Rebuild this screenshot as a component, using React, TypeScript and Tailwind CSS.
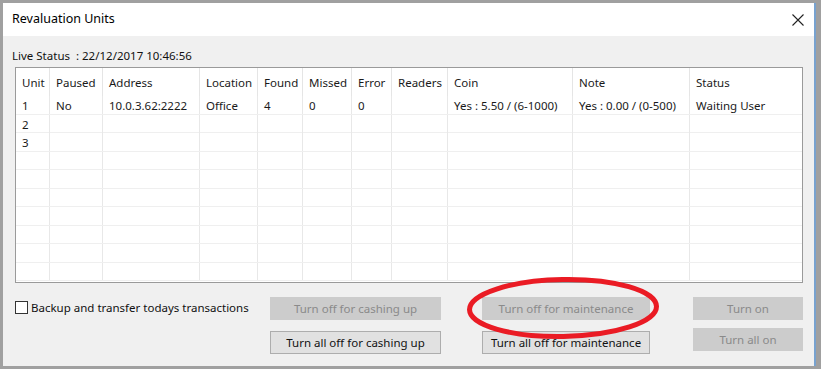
import React from "react"

const cols = [34, 53, 97, 58, 45, 49, 40, 56, 125, 117, 112]
const headers = ["Unit", "Paused", "Address", "Location", "Found", "Missed", "Error", "Readers", "Coin", "Note", "Status"]
const rows: string[][] = [
    ["1", "No", "10.0.3.62:2222", "Office", "4", "0", "0", "", "Yes : 5.50 / (6-1000)", "Yes : 0.00 / (0-500)", "Waiting User"],
    ["2"],
    ["3"],
    [], [], [], [], [], [], [],
]
const rowHeights = [19, 18, 19, 18, 19, 18, 19, 18, 19, 18]

const gridCols = "grid grid-cols-[34px_53px_97px_58px_45px_49px_40px_56px_125px_117px_1fr]"

const Btn = ({children, disabled=false, className=""}:{children:React.ReactNode, disabled?:boolean, className?:string})=>{
    return(
        <button
            className={
                "h-[23px] flex items-center justify-center text-[11.5px] leading-none " +
                (disabled
                    ? "bg-[#cccccc] text-[#8a8a8a] border border-[#cccccc] "
                    : "bg-[#e1e1e1] text-[#111] border border-[#adadad] ") + className
            }
        >
            {children}
        </button>
    )
}

export default function App(){
    return(
        <div className="relative w-[821px] h-[369px] bg-[#a0a0a0] pt-[3px] pl-[3px] font-['Noto_Sans',sans-serif] text-[11.5px] text-[#1a1a1a] overflow-hidden">
            <div className="w-[813px] h-[363px] flex flex-col bg-[#f0f0f0] border-r-2 border-[#78a2cf]">
                {/* title bar */}
                <div className="h-[33px] bg-white flex items-center justify-between pl-[9px] pr-[9px]">
                    <span className="text-[12.5px] text-black">Revaluation Units</span>
                    <svg width="12" height="12" viewBox="0 0 12 12" className="mr-[1px]">
                        <path d="M0.5 0.5 L11.5 11.5 M11.5 0.5 L0.5 11.5" stroke="#222" strokeWidth="1.1" fill="none" />
                    </svg>
                </div>
                <div className="flex flex-col pl-[12px] pt-[12px]">
                    <div className="h-[16px] leading-[16px] ml-[-3px] text-[#111]">Live Status&nbsp; : 22/12/2017 10:46:56</div>
                    <div className="mt-[3px] w-[788px] h-[216px] border border-[#9a9a9a] bg-white overflow-hidden flex flex-col">
                        <div className={gridCols + " h-[28px] shrink-0"}>
                            {headers.map((h, i)=>(
                                <div key={i} className={"flex items-center pl-[6px] pt-[2px] whitespace-nowrap " + (i < cols.length - 1 ? "border-r border-[#e5e5e5]" : "")}>{h}</div>
                            ))}
                        </div>
                        {rows.map((r, ri)=>(
                            <div key={ri} className={gridCols + " shrink-0 border-b border-[#efefef]"} style={{height: rowHeights[ri]}}>
                                {cols.map((_, ci)=>(
                                    <div key={ci} className={"flex items-center pl-[6px] pt-[1px] whitespace-nowrap " + (ci < cols.length - 1 ? "border-r border-[#e8e8e8]" : "")}>{r[ci] ?? ""}</div>
                                ))}
                            </div>
                        ))}
                        <div className={gridCols + " flex-1"}>
                            {cols.map((_, ci)=>(
                                <div key={ci} className={ci < cols.length - 1 ? "border-r border-[#e8e8e8] mb-[2px]" : ""}></div>
                            ))}
                        </div>
                    </div>
                    <div className="flex mt-[14px]">
                        <div className="w-[255px] flex items-start pt-[4px]">
                            <div className="w-[13px] h-[13px] border border-[#333] bg-white"></div>
                            <span className="ml-[3px] leading-[14px] text-[#111]">Backup and transfer todays transactions</span>
                        </div>
                        <div className="w-[171px] flex flex-col gap-[11px]">
                            <Btn disabled>Turn off for cashing up</Btn>
                            <Btn>Turn all off for cashing up</Btn>
                        </div>
                        <div className="w-[168px] ml-[41px] flex flex-col gap-[11px]">
                            <Btn disabled>Turn off for maintenance</Btn>
                            <Btn>Turn all off for maintenance</Btn>
                        </div>
                        <div className="w-[110px] ml-[43px] flex flex-col gap-[8px]">
                            <Btn disabled>Turn on</Btn>
                            <Btn disabled>Turn all on</Btn>
                        </div>
                    </div>
                </div>
            </div>
            <svg className="absolute left-0 top-0 pointer-events-none" width="821" height="369">
                <ellipse cx="563" cy="308" rx="93.5" ry="28.5" fill="none" stroke="#ea1b24" strokeWidth="5" transform="rotate(-1 563 308)" />
            </svg>
        </div>
    )
}
